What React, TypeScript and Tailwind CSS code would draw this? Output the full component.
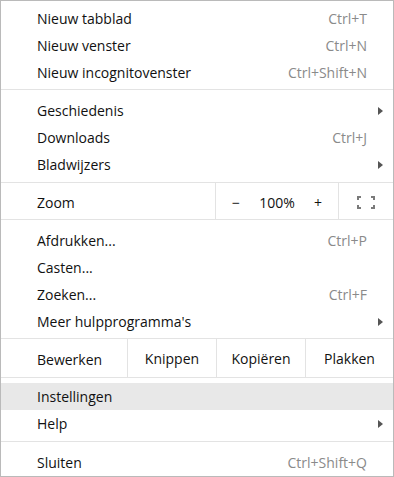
import React from "react";

type Item = { label: string; shortcut?: string; submenu?: boolean; active?: boolean };

const Arrow = () => (
  <svg width="5" height="8" viewBox="0 0 5 8" className="absolute right-[10px] top-1/2 -translate-y-1/2">
    <path d="M0 0 L5 4 L0 8 Z" fill="#555" />
  </svg>
);

const Row: React.FC<{ item: Item }> = ({ item }) => (
  <div
    className={`relative flex h-[27px] items-center justify-between pl-[36px] pr-[26px] ${
      item.active ? "bg-[#e8e8e8]" : ""
    }`}
  >
    <span>{item.label}</span>
    {item.shortcut && <span className="text-[#8a8a8a]">{item.shortcut}</span>}
    {item.submenu && <Arrow />}
  </div>
);

const Group: React.FC<{ items: Item[]; className: string }> = ({ items, className }) => (
  <div className={className}>
    {items.map((it) => (
      <Row key={it.label} item={it} />
    ))}
  </div>
);

const Sep = () => <div className="h-px bg-[#e3e3e3]" />;

const FullscreenIcon = () => (
  <svg width="18" height="13" viewBox="0 0 18 13" fill="none" stroke="#7a7a7a" strokeWidth="2">
    <path d="M1 4 V1 H4" />
    <path d="M14 1 H17 V4" />
    <path d="M17 9 V12 H14" />
    <path d="M4 12 H1 V9" />
  </svg>
);

export default function App() {
  return (
    <div
      className="h-[477px] w-[394px] border border-[#bababa] bg-white text-[14px] text-[#111]"
      style={{ fontFamily: '"Open Sans", "Noto Sans", sans-serif' }}
    >
      <Group
        className="pb-[3px] pt-[4px]"
        items={[
          { label: "Nieuw tabblad", shortcut: "Ctrl+T" },
          { label: "Nieuw venster", shortcut: "Ctrl+N" },
          { label: "Nieuw incognitovenster", shortcut: "Ctrl+Shift+N" },
        ]}
      />
      <Sep />
      <Group
        className="pb-[4px] pt-[7px]"
        items={[
          { label: "Geschiedenis", submenu: true },
          { label: "Downloads", shortcut: "Ctrl+J" },
          { label: "Bladwijzers", submenu: true },
        ]}
      />
      <Sep />
      <div className="flex h-[36px] items-stretch">
        <div className="flex flex-1 items-center pl-[36px] pt-[3px]">Zoom</div>
        <div className="flex w-[123px] items-center border-l border-[#e3e3e3] pt-[3px]">
          <span className="w-[40px] text-center">−</span>
          <span className="flex-1 text-center">100%</span>
          <span className="w-[40px] text-center">+</span>
        </div>
        <div className="flex w-[55px] items-center justify-center border-l border-[#e3e3e3] pt-[2px]">
          <FullscreenIcon />
        </div>
      </div>
      <Sep />
      <Group
        className="pb-[3px] pt-[7px]"
        items={[
          { label: "Afdrukken...", shortcut: "Ctrl+P" },
          { label: "Casten..." },
          { label: "Zoeken...", shortcut: "Ctrl+F" },
          { label: "Meer hulpprogramma's", submenu: true },
        ]}
      />
      <Sep />
      <div className="flex h-[38px] items-stretch">
        <div className="flex flex-1 items-center pl-[36px] pt-[2px]">Bewerken</div>
        <div className="flex w-[89px] items-center justify-center border-l border-[#e3e3e3]">Knippen</div>
        <div className="flex w-[89px] items-center justify-center border-l border-[#e3e3e3]">Kopiëren</div>
        <div className="flex w-[88px] items-center justify-center border-l border-[#e3e3e3]">Plakken</div>
      </div>
      <Sep />
      <Group
        className="pb-[4px] pt-[5px]"
        items={[
          { label: "Instellingen", active: true },
          { label: "Help", submenu: true },
        ]}
      />
      <Sep />
      <Group className="pt-[7px]" items={[{ label: "Sluiten", shortcut: "Ctrl+Shift+Q" }]} />
    </div>
  );
}
